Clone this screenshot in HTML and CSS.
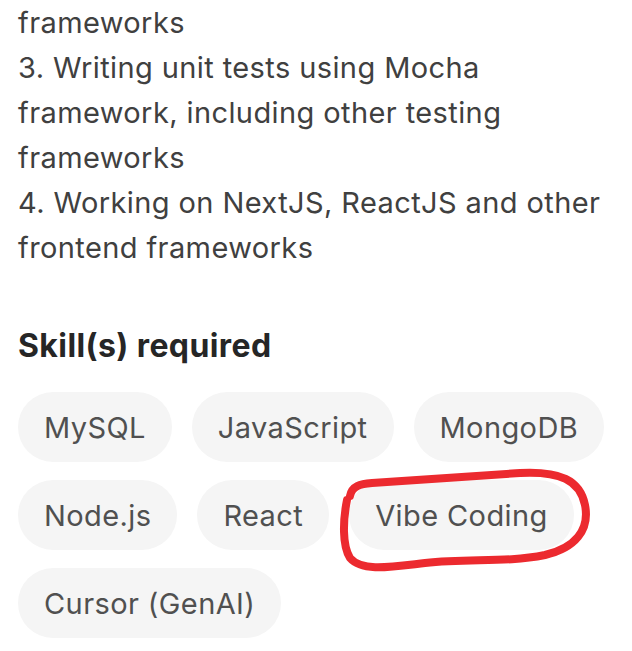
FILE: index.html
```html
<!DOCTYPE html>
<html lang="en">
<head>
<meta charset="utf-8">
<title>Skills</title>
<link rel="stylesheet" href="styles.css">
</head>
<body>
<main class="page">
  <p class="desc">frameworks<br>3. Writing unit tests using Mocha<br>framework, including other testing<br>frameworks<br>4. Working on NextJS, ReactJS and other<br>frontend frameworks</p>
  <h2 class="heading">Skill(s) required</h2>
  <ul class="chips">
    <li class="chip">MySQL</li>
    <li class="chip">JavaScript</li>
    <li class="chip">MongoDB</li>
    <li class="chip">Node.js</li>
    <li class="chip">React</li>
    <li class="chip">Vibe Coding</li>
    <li class="chip">Cursor (GenAI)</li>
  </ul>
</main>
<svg class="scribble" viewBox="0 0 632 651" width="632" height="651" aria-hidden="true">
  <path d="M350,496 C352,486 360,484 372,483 C420,480 470,476 520,473 C560,471 580,480 585,505 C590,530 575,548 545,555 C505,563 470,558 425,563 C390,567 362,572 350,558 C342,545 343,520 347,500" fill="none" stroke="#ec2a2f" stroke-width="8" stroke-linecap="round" stroke-linejoin="round"/>
</svg>
</body>
</html>
```
FILE: styles.css
```css
html, body {
  margin: 0;
  padding: 0;
  background: #ffffff;
}
body {
  width: 632px;
  height: 651px;
  overflow: hidden;
  position: relative;
  font-family: Inter, "Noto Sans", sans-serif;
}
.page {
  padding: 0 18px;
}
.desc {
  margin: 0;
  font-size: 29px;
  line-height: 45px;
  letter-spacing: 0.4px;
  color: #404040;
  white-space: nowrap;
}
.heading {
  margin: 56px 0 0;
  font-size: 32px;
  line-height: 40px;
  font-weight: 700;
  letter-spacing: 0.4px;
  color: #262626;
}
.chips {
  list-style: none;
  margin: 26px 0 0;
  padding: 0;
  display: flex;
  flex-wrap: wrap;
  gap: 18px 20px;
  width: 600px;
}
.chip {
  height: 70px;
  padding: 0 26px;
  display: flex;
  align-items: center;
  border-radius: 35px;
  background: #f5f5f5;
  font-size: 29px;
  letter-spacing: 0.4px;
  color: #505050;
}
.scribble {
  position: absolute;
  left: 0;
  top: 0;
  pointer-events: none;
}
```
